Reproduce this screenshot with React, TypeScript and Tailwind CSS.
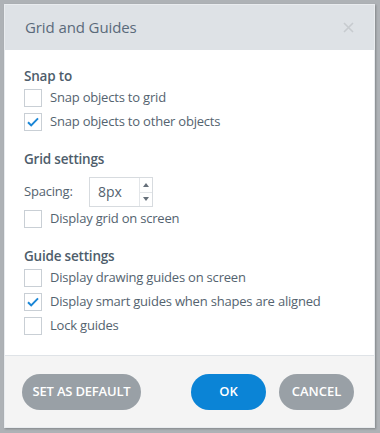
import { useState } from 'react'

const font = { fontFamily: '"Open Sans", "Noto Sans", sans-serif' }

function Check({ checked, label, onToggle }: { checked: boolean; label: string; onToggle: () => void }) {
  return (
    <label className="flex h-6 items-center cursor-pointer" onClick={onToggle}>
      <span className="flex h-[18px] w-[18px] items-center justify-center border border-[#c9cfd5] bg-white">
        {checked && (
          <svg width="12" height="10" viewBox="0 0 12 10" fill="none">
            <path d="M1 5.2l3.2 3.2L11 1.4" stroke="#1a86d6" strokeWidth="2" />
          </svg>
        )}
      </span>
      <span className="ml-2 text-[13px] tracking-[-0.2px] text-[#54636f]">{label}</span>
    </label>
  )
}

export default function App() {
  const [opts, setOpts] = useState({
    grid: false,
    objects: true,
    showGrid: false,
    drawing: false,
    smart: true,
    lock: false,
  })
  const toggle = (k: keyof typeof opts) => setOpts((o) => ({ ...o, [k]: !o[k] }))

  return (
    <div className="h-[433px] w-[380px] bg-[#aeb2b6] pl-[4px] pt-[4px]" style={font}>
      <div className="flex h-[424px] w-[371px] flex-col border border-[#e9ecef] shadow-[1px_1px_2px_rgba(0,0,0,0.25)]">
        {/* header */}
        <div className="flex h-[45px] items-center justify-between bg-[#dee2e6] pl-5 pr-5">
          <h1 className="text-[15px] tracking-[-0.1px] text-[#5a6a7a]">Grid and Guides</h1>
          <svg width="11" height="11" viewBox="0 0 11 11">
            <path d="M1 1l9 9M10 1l-9 9" stroke="#c7cbcf" strokeWidth="1.6" />
          </svg>
        </div>

        {/* body */}
        <div className="flex-1 bg-white pl-[19px] pt-[17px]">
          <h2 className="text-[13.5px] font-semibold leading-[19px] tracking-[-0.2px] text-[#4e5d6b]">Snap to</h2>
          <Check checked={opts.grid} label="Snap objects to grid" onToggle={() => toggle('grid')} />
          <Check checked={opts.objects} label="Snap objects to other objects" onToggle={() => toggle('objects')} />

          <h2 className="mt-4 text-[13.5px] font-semibold leading-[19px] tracking-[-0.2px] text-[#4e5d6b]">Grid settings</h2>
          <div className="mt-2 flex h-[30px] items-center">
            <span className="w-[65px] text-[13px] tracking-[-0.2px] text-[#54636f]">Spacing:</span>
            <div className="flex h-[30px] w-[64px] border border-[#d7dbdf] bg-white">
              <span className="flex-1 pl-2 text-[14px] leading-[28px] text-[#54636f]">8px</span>
              <div className="flex w-[13px] flex-col border-l border-[#e3e6e9]">
                <div className="flex flex-1 items-center justify-center border-b border-[#e3e6e9]">
                  <svg width="6" height="4" viewBox="0 0 6 4"><path d="M0 4L3 0l3 4z" fill="#66707a" /></svg>
                </div>
                <div className="flex flex-1 items-center justify-center">
                  <svg width="6" height="4" viewBox="0 0 6 4"><path d="M0 0l3 4 3-4z" fill="#66707a" /></svg>
                </div>
              </div>
            </div>
          </div>
          <Check checked={opts.showGrid} label="Display grid on screen" onToggle={() => toggle('showGrid')} />

          <h2 className="mt-4 text-[13.5px] font-semibold leading-[19px] tracking-[-0.2px] text-[#4e5d6b]">Guide settings</h2>
          <Check checked={opts.drawing} label="Display drawing guides on screen" onToggle={() => toggle('drawing')} />
          <Check checked={opts.smart} label="Display smart guides when shapes are aligned" onToggle={() => toggle('smart')} />
          <Check checked={opts.lock} label="Lock guides" onToggle={() => toggle('lock')} />
        </div>

        {/* footer */}
        <div className="flex h-[72px] items-center border-t border-[#dfe3e7] bg-[#f4f4f4] pl-[17px] pr-[20px]">
          <button className="h-9 w-[119px] rounded-full bg-[#99a0a6] text-[13px] font-semibold tracking-[-0.2px] text-white">
            SET AS DEFAULT
          </button>
          <button className="ml-auto h-9 w-[75px] rounded-full bg-[#0b84d6] text-[13px] font-semibold text-white">
            OK
          </button>
          <button className="ml-[13px] h-9 w-[75px] rounded-full bg-[#99a0a6] text-[13px] font-semibold text-white">
            CANCEL
          </button>
        </div>
      </div>
    </div>
  )
}
